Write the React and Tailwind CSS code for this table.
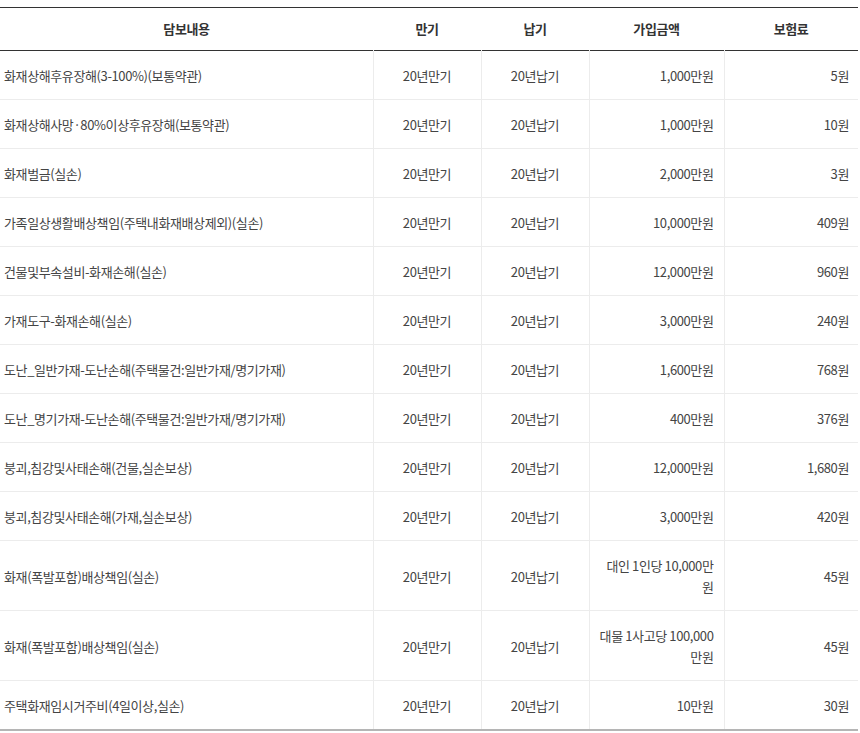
import React from 'react';

const rows = [
    ['화재상해후유장해(3-100%)(보통약관)', '1,000만원', '5원'],
    ['화재상해사망·80%이상후유장해(보통약관)', '1,000만원', '10원'],
    ['화재벌금(실손)', '2,000만원', '3원'],
    ['가족일상생활배상책임(주택내화재배상제외)(실손)', '10,000만원', '409원'],
    ['건물및부속설비-화재손해(실손)', '12,000만원', '960원'],
    ['가재도구-화재손해(실손)', '3,000만원', '240원'],
    ['도난_일반가재-도난손해(주택물건:일반가재/명기가재)', '1,600만원', '768원'],
    ['도난_명기가재-도난손해(주택물건:일반가재/명기가재)', '400만원', '376원'],
    ['붕괴,침강및사태손해(건물,실손보상)', '12,000만원', '1,680원'],
    ['붕괴,침강및사태손해(가재,실손보상)', '3,000만원', '420원'],
    ['화재(폭발포함)배상책임(실손)', '대인 1인당 10,000만원', '45원'],
    ['화재(폭발포함)배상책임(실손)', '대물 1사고당 100,000만원', '45원'],
    ['주택화재임시거주비(4일이상,실손)', '10만원', '30원'],
];

const App = () => {
    return (
        <div className="bg-white min-h-screen pt-[7px] text-[#444] tracking-[-0.03em] text-[13px]" style={{ fontFamily: '"Noto Sans CJK KR", "Noto Sans", sans-serif' }}>
            <table className="w-[858px] table-fixed border-collapse border-t border-t-[#333] border-b-2 border-b-[#b5b5b5]">
                <colgroup>
                    <col className="w-[373px]" />
                    <col className="w-[108px]" />
                    <col className="w-[108px]" />
                    <col className="w-[135px]" />
                    <col className="w-[134px]" />
                </colgroup>
                <thead>
                    <tr className="border-b border-b-[#333] h-[43px]">
                        <th className="font-bold text-[#333] text-center">담보내용</th>
                        <th className="font-bold text-[#333] text-center">만기</th>
                        <th className="font-bold text-[#333] text-center">납기</th>
                        <th className="font-bold text-[#333] text-center">가입금액</th>
                        <th className="font-bold text-[#333] text-center">보험료</th>
                    </tr>
                </thead>
                <tbody>
                    {rows.map((r, i) => (
                        <tr key={i} className={i < rows.length - 1 ? 'border-b border-b-[#ececec]' : ''}>
                            <td className="pl-[4px] pt-[14px] pb-[13px] leading-[21px] text-left">{r[0]}</td>
                            <td className="border-l border-l-[#ececec] pt-[14px] pb-[13px] leading-[21px] text-center">20년만기</td>
                            <td className="border-l border-l-[#ececec] pt-[14px] pb-[13px] leading-[21px] text-center">20년납기</td>
                            <td className="border-l border-l-[#ececec] pt-[14px] pb-[13px] leading-[21px] text-right px-[10px]">{r[1]}</td>
                            <td className="border-l border-l-[#ececec] pt-[14px] pb-[13px] leading-[21px] text-right px-[9px]">{r[2]}</td>
                        </tr>
                    ))}
                </tbody>
            </table>
        </div>
    );
};

export default App;
